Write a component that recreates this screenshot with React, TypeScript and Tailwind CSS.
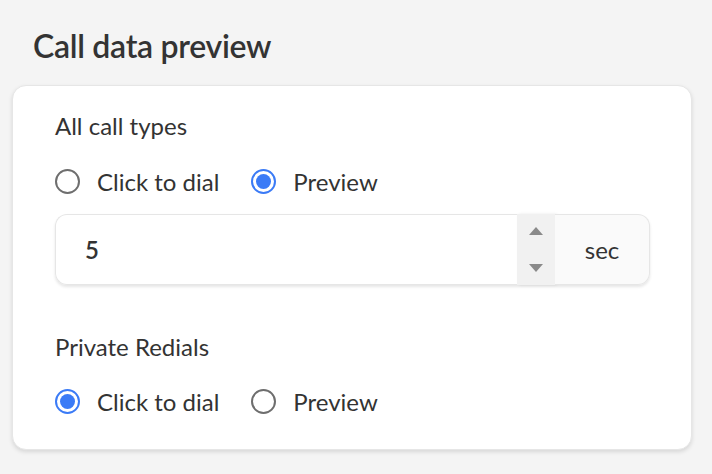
import { useState } from 'react'

const Radio = ({ checked, label, onClick }: { checked: boolean; label: string; onClick: () => void }) => (
  <button type="button" onClick={onClick} className="flex items-center gap-[17px]">
    <span
      className={
        checked
          ? 'flex h-[25px] w-[25px] items-center justify-center rounded-full border-2 border-[#3b7bf6] bg-white'
          : 'h-[25px] w-[25px] rounded-full border-2 border-[#6e6e6e] bg-white'
      }
    >
      {checked && <span className="h-[15px] w-[15px] rounded-full bg-[#3b7bf6]" />}
    </span>
    <span className="text-[24px] leading-none text-[#333]">{label}</span>
  </button>
)

const RadioGroup = ({ initial }: { initial: string }) => {
  const [value, setValue] = useState(initial)
  return (
    <div className="flex items-center gap-[32px]">
      <Radio checked={value === 'dial'} label="Click to dial" onClick={() => setValue('dial')} />
      <Radio checked={value === 'preview'} label="Preview" onClick={() => setValue('preview')} />
    </div>
  )
}

export default function App() {
  const [seconds, setSeconds] = useState(5)

  return (
    <div className="h-[474px] w-[712px] bg-[#f4f4f4] pl-[12px] pr-[20px] pt-[28px] font-['Lato',sans-serif] text-[#333]">
      <h1 className="ml-[21px] text-[32px] font-semibold leading-[36px] tracking-[-0.3px]">Call data preview</h1>

      <div className="mt-[21px] h-[365px] rounded-[14px] border border-[#e6e6e6] bg-white pl-[42px] pr-[41px] pt-[26px] shadow-[0_2px_4px_rgba(0,0,0,0.12)]">
        <div className="text-[24px] leading-[28px]">All call types</div>

        <div className="mt-[29px]">
          <RadioGroup initial="preview" />
        </div>

        <div className="mt-[20px] flex h-[71px] rounded-[12px] shadow-[0_2px_3px_rgba(0,0,0,0.1)]">
          <div className="flex flex-1 items-center rounded-l-[12px] border border-r-0 border-[#e6e6e6] bg-white pl-[29px]">
            <span className="text-[24px] font-semibold">{seconds}</span>
          </div>
          <div className="flex w-[38px] flex-col items-center justify-between bg-[#f1f1f1] py-[12px] shadow-[2px_0_3px_rgba(0,0,0,0.08)]">
            <button type="button" onClick={() => setSeconds(seconds + 1)}>
              <svg width="16" height="10" viewBox="0 0 16 10">
                <path d="M8 1 L15 9 L1 9 Z" fill="#8a8a8a" />
              </svg>
            </button>
            <button type="button" onClick={() => setSeconds(Math.max(0, seconds - 1))}>
              <svg width="16" height="10" viewBox="0 0 16 10">
                <path d="M1 1 L15 1 L8 9 Z" fill="#8a8a8a" />
              </svg>
            </button>
          </div>
          <div className="flex w-[95px] items-center justify-center rounded-r-[12px] border border-l-0 border-[#e6e6e6] bg-[#fafafa] text-[24px]">
            sec
          </div>
        </div>

        <div className="mt-[48px] text-[24px] leading-[28px]">Private Redials</div>

        <div className="mt-[28px]">
          <RadioGroup initial="dial" />
        </div>
      </div>
    </div>
  )
}
